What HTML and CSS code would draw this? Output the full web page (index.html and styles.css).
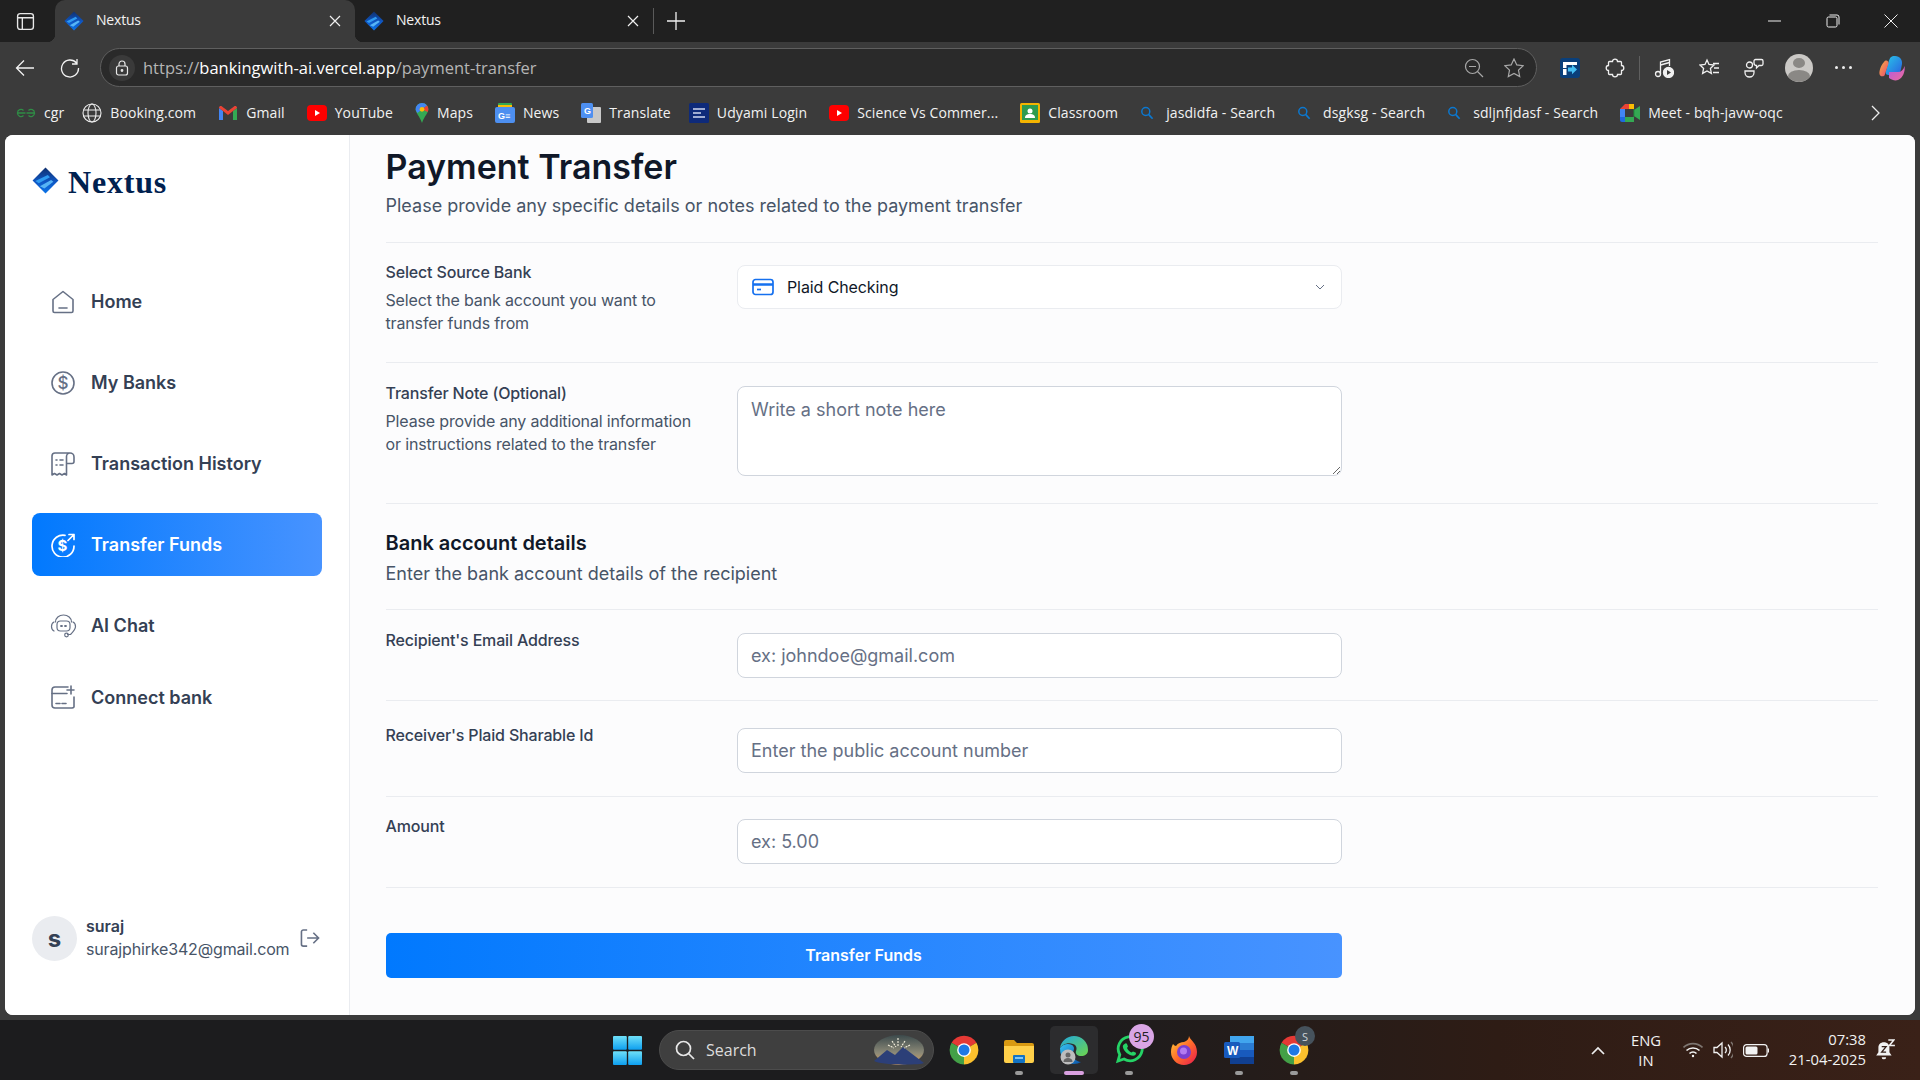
FILE: index.html
```html
<!DOCTYPE html>
<html lang="en">
<head>
<meta charset="utf-8">
<title>Nextus - Payment Transfer</title>
<link rel="stylesheet" href="styles.css">
</head>
<body>
<svg class="defs" width="0" height="0" aria-hidden="true">
  <defs>
    <linearGradient id="favg" x1="0" y1="0" x2="0" y2="1"><stop offset="0" stop-color="#10306e"/><stop offset=".55" stop-color="#0f57c4"/><stop offset="1" stop-color="#0a74e8"/></linearGradient>
    <symbol id="fav" viewBox="0 0 24 24">
      <path d="M12 .5 23.500 12 12 23.500 .5 12z" fill="url(#favg)"/>
      <path d="M3 12.500 14 7l2 2L6 14.500z" fill="#2f9bf0"/>
      <path d="M7 17l10-5.500 2 1.500-8 6z" fill="#57b4f5"/>
    </symbol>
    <symbol id="yt" viewBox="0 0 20 16"><rect width="20" height="16" rx="4" fill="#f00"/><path d="M8 5l5 3-5 3z" fill="#fff"/></symbol>
    <symbol id="mag" viewBox="0 0 14 14"><circle cx="5.8" cy="5.5" r="4" fill="none" stroke="#0b78d0" stroke-width="1.5"/><path d="M8.8 8.6 12.6 12.8" stroke="#0b78d0" stroke-width="1.7"/></symbol>
    <symbol id="chrome" viewBox="0 0 48 48">
      <path d="M24 24 4.100 12.500A23 23 0 0 1 43.900 12.500z" fill="#e53935"/>
      <path d="M24 24V47A23 23 0 0 1 4.100 12.500z" fill="#43a047"/>
      <path d="M24 24 43.900 12.500A23 23 0 0 1 24 47z" fill="#fbc02d"/>
      <circle cx="24" cy="24" r="11" fill="#fff"/><circle cx="24" cy="24" r="8.800" fill="#1e78e6"/>
    </symbol>
    <linearGradient id="copg1" x1="0" y1="0" x2="1" y2="1"><stop offset="0" stop-color="#28c6e8"/><stop offset="1" stop-color="#2a5fe0"/></linearGradient>
    <linearGradient id="copg2" x1="0" y1="0" x2="1" y2="1"><stop offset="0" stop-color="#f7b23b"/><stop offset="1" stop-color="#e9447a"/></linearGradient>
    <linearGradient id="copg3" x1="0" y1="0" x2="1" y2="1"><stop offset="0" stop-color="#b05be0"/><stop offset="1" stop-color="#f06a9c"/></linearGradient>
    <linearGradient id="edgeg" x1="0" y1="0" x2="1" y2="1"><stop offset="0" stop-color="#35c1f1"/><stop offset="1" stop-color="#0b53a8"/></linearGradient>
    <linearGradient id="edgeg2" x1="0" y1="0" x2="1" y2="1"><stop offset="0" stop-color="#1fa8e0"/><stop offset="1" stop-color="#6ed64b"/></linearGradient>
    <linearGradient id="ffg" x1="0" y1="0" x2="1" y2="1"><stop offset="0" stop-color="#ffd23a"/><stop offset=".5" stop-color="#ff6b2b"/><stop offset="1" stop-color="#e8184f"/></linearGradient>
    <linearGradient id="wing" x1="0" y1="0" x2="0" y2="1"><stop offset="0" stop-color="#6fe0f8"/><stop offset="1" stop-color="#0d9ff0"/></linearGradient>
    <linearGradient id="skyg" x1="0" y1="0" x2="0" y2="1"><stop offset="0" stop-color="#3c4a4c"/><stop offset=".6" stop-color="#8d8a78"/><stop offset="1" stop-color="#d9a25c"/></linearGradient>
  </defs>
</svg>

<div class="browser">
  <div class="tabstrip">
    <div class="tab-toggle">
      <svg class="ico-18" viewBox="0 0 18 18" fill="none" stroke="#e8e8e8" stroke-width="1.300"><rect x="1.500" y="1.500" width="15" height="15" rx="2.500"/><path d="M1.500 5.500h15M6 5.500v11"/></svg>
    </div>
    <div class="tab tab--active">
      <svg class="ico-20"><use href="#fav"/></svg>
      <span class="tab-title">Nextus</span>
      <svg class="tab-close" viewBox="0 0 12 12" fill="none" stroke="#f0f0f0" stroke-width="1.200"><path d="M1 1l10 10M11 1 1 11"/></svg>
    </div>
    <div class="tab">
      <svg class="ico-20"><use href="#fav"/></svg>
      <span class="tab-title">Nextus</span>
      <svg class="tab-close" viewBox="0 0 12 12" fill="none" stroke="#f0f0f0" stroke-width="1.200"><path d="M1 1l10 10M11 1 1 11"/></svg>
    </div>
    <div class="tab-sep"></div>
    <svg class="tab-plus" viewBox="0 0 18 18" fill="none" stroke="#f0f0f0" stroke-width="1.300"><path d="M9 0v18M0 9h18"/></svg>
    <div class="win-controls">
      <div class="win-btn"><svg class="ico-14" viewBox="0 0 14 14" fill="none" stroke="#eee" stroke-width="1"><path d="M0 7h13"/></svg></div>
      <div class="win-btn"><svg class="ico-14" viewBox="0 0 14 14" fill="none" stroke="#eee" stroke-width="1"><rect x="1" y="3" width="10" height="10" rx="1.500"/><path d="M3.500 1H11a2 2 0 0 1 2 2v7.500"/></svg></div>
      <div class="win-btn"><svg class="ico-14" viewBox="0 0 14 14" fill="none" stroke="#eee" stroke-width="1"><path d="M.5.5l13 13M13.500.5l-13 13"/></svg></div>
    </div>
  </div>

  <div class="toolbar">
    <div class="tb-slot"><svg class="ico-20" viewBox="0 0 20 20" fill="none" stroke="#f2f2f2" stroke-width="1.300"><path d="M19 10H1.500M9 2.500 1.500 10 9 17.500"/></svg></div>
    <div class="tb-slot"><svg class="ico-20" viewBox="0 0 20 20" fill="none" stroke="#f2f2f2" stroke-width="1.300"><path d="M16.500 5A8.500 8.500 0 1 0 18.500 10M17 1v5h-5"/></svg></div>
    <div class="addressbar">
      <div class="lock"><svg class="ico-16" viewBox="0 0 16 16" fill="none" stroke="#e8e8e8" stroke-width="1.200"><rect x="2.500" y="6" width="11" height="9" rx="2"/><path d="M5 6V4a3 3 0 0 1 6 0v2"/><circle cx="8" cy="10.500" r=".8" fill="#e8e8e8"/></svg></div>
      <div class="url"><span class="url-dim">https://</span><span class="url-host">bankingwith-ai.vercel.app</span><span class="url-dim">/payment-transfer</span></div>
      <div class="addr-icons">
        <div class="addr-slot"><svg class="ico-20" viewBox="0 0 20 20" fill="none" stroke="#a8a8a8" stroke-width="1.200"><circle cx="8.500" cy="8.500" r="7"/><path d="M13.500 13.500 19 19M5 8.500h7"/></svg></div>
        <div class="addr-slot"><svg class="ico-20" viewBox="0 0 20 20" fill="none" stroke="#a8a8a8" stroke-width="1.200"><path d="M10 1l2.800 5.900 6.400.8-4.700 4.400 1.200 6.400L10 15.400l-5.700 3.100 1.200-6.400L.8 7.700l6.400-.8z"/></svg></div>
      </div>
    </div>
    <div class="tb-icons">
      <div class="tb-slot"><svg class="ico-20" viewBox="0 0 20 20"><rect width="20" height="20" rx="3" fill="#0a3f7a"/><path d="M3 4h14v3H6.500v3H3zM3 11h3.500v6H3z" fill="#fff"/><path d="M8 9.500h4V6.800l5 4.700-5 4.700v-2.700H8z" fill="#45c0f5"/></svg></div>
      <div class="tb-slot"><svg class="ico-20" viewBox="0 0 20 20" fill="none" stroke="#f0f0f0" stroke-width="1.300"><path d="M7.500 3.500C7.500 2 8.700 1.200 10 1.200S12.500 2 12.500 3.500H15.500a1 1 0 0 1 1 1V7.500C18 7.500 18.800 8.700 18.800 10S18 12.500 16.500 12.500V15.500a1 1 0 0 1-1 1H12.500C12.500 18 11.300 18.800 10 18.800S7.500 18 7.500 16.500H4.500a1 1 0 0 1-1-1V12.500C2 12.500 1.200 11.300 1.200 10S2 7.500 3.500 7.500V4.500a1 1 0 0 1 1-1z"/></svg></div>
      <div class="tb-sep"></div>
      <div class="tb-slot"><svg class="ico-20" viewBox="0 0 20 20" fill="none" stroke="#f0f0f0" stroke-width="1.300"><circle cx="4" cy="16" r="2.500"/><path d="M6.500 16V4l9-2.500V8"/><path d="M6.500 7l9-2.500"/><circle cx="14.500" cy="14.500" r="5" fill="#f0f0f0"/><path d="M13 12v5l4-2.500z" fill="#3b3b3b" stroke="none"/></svg></div>
      <div class="tb-slot"><svg class="ico-20" viewBox="0 0 20 20" fill="none" stroke="#f0f0f0" stroke-width="1.300"><path d="M8 2l2 4.500 5 .6-3.600 3.300 1 5L8 13l-4.400 2.400 1-5L1 7.100l5-.6z"/><path d="M14 5.500h6M15 10h5M14 14.500h6"/></svg></div>
      <div class="tb-slot"><svg class="ico-20" viewBox="0 0 20 20" fill="none" stroke="#f0f0f0" stroke-width="1.300"><circle cx="5.500" cy="7" r="3"/><path d="M1 13h9v1.500A4.500 4.500 0 0 1 1 14.500z"/><path d="M10 3a1.500 1.500 0 0 1 1.500-1.500h6A1.500 1.500 0 0 1 19 3v3a1.500 1.500 0 0 1-1.500 1.500H15L12.500 10V7.500A2.500 2.500 0 0 1 10 5z"/></svg></div>
      <div class="tb-slot"><div class="profile"><div class="profile-head"></div><div class="profile-body"></div></div></div>
      <div class="tb-slot"><span class="dots"><i></i><i></i><i></i></span></div>
      <div class="tb-slot tb-slot--wide"><svg class="ico-28" viewBox="0 0 28 28"><path d="M17 2c-4 0-5 1.500-6.500 6L8 17c-1 3 .5 4 3 4h6c4 0 5-2 6-6l1-5c.5-4-2-8-7-8z" fill="url(#copg1)"/><path d="M6 8C3 11 1 17 1.500 20c.5 2.500 3 3 5 1.500l4-12C11 7 8 5 6 8z" fill="url(#copg2)"/><path d="M11 18h9c3 0 5.500-2 6.500-6 1 5-1.500 12-6.500 14-3 1-6 0-9-2z" fill="url(#copg3)"/></svg></div>
    </div>
  </div>

  <div class="bookmarks">
    <a class="bm bm--tight"><svg class="bm-ico bm-ico--wide" viewBox="0 0 20 10" fill="none" stroke="#2f8d46" stroke-width="1.300"><path d="M9.500 5H1.500a3.500 3.500 0 0 1 6-2.500M10.500 5h8a3.500 3.500 0 0 0-6-2.500M1.500 5a3.500 3.500 0 0 0 6 2.500M18.500 5a3.500 3.500 0 0 1-6 2.500"/></svg><span>cgr</span></a>
    <a class="bm"><svg class="bm-ico" viewBox="0 0 20 20" fill="none" stroke="#eee" stroke-width="1.100"><circle cx="10" cy="10" r="9"/><ellipse cx="10" cy="10" rx="4" ry="9"/><path d="M1.500 7h17M1.500 13h17"/></svg><span>Booking.com</span></a>
    <a class="bm"><svg class="bm-ico" viewBox="0 0 20 16"><path d="M1 15V3l4 3v9z" fill="#4285f4"/><path d="M19 15V3l-4 3v9z" fill="#34a853"/><path d="M1 3c0-2 2-2.500 3-1.500L10 6l6-4.500c1-1 3-.5 3 1.500l-4 3-5 4-5-4z" fill="#ea4335"/></svg><span>Gmail</span></a>
    <a class="bm"><svg class="bm-ico"><use href="#yt"/></svg><span>YouTube</span></a>
    <a class="bm"><svg class="bm-ico bm-ico--narrow" viewBox="0 0 14 22"><path d="M7 0a7 7 0 0 1 7 7c0 4-4 7-7 15C4 14 0 11 0 7a7 7 0 0 1 7-7z" fill="#34a853"/><path d="M7 0a7 7 0 0 1 5.500 2.700L2 11C1 9.500 0 8.500 0 7a7 7 0 0 1 7-7z" fill="#4285f4"/><path d="M12.500 2.700A7 7 0 0 1 14 7c0 1-.3 2-.8 3L7 7z" fill="#ea4335"/><circle cx="7" cy="7" r="2.600" fill="#fbbc04"/></svg><span>Maps</span></a>
    <a class="bm"><svg class="bm-ico" viewBox="0 0 20 20"><rect x="3" y="0" width="14" height="6" rx="1" fill="#34a853"/><rect x="0" y="4" width="20" height="16" rx="2" fill="#4d8ff0"/><rect x="3" y="2" width="14" height="2" fill="#fbbc04"/><text x="3" y="16" class="bm-news">G≡</text></svg><span>News</span></a>
    <a class="bm bm--tight"><svg class="bm-ico" viewBox="0 0 20 20"><rect x="6" y="4" width="14" height="16" rx="1" fill="#c8c8c8"/><rect width="12" height="15" rx="1.500" fill="#4d8ff0"/><text x="3" y="11" class="bm-news">G</text></svg><span>Translate</span></a>
    <a class="bm"><svg class="bm-ico" viewBox="0 0 20 20"><rect width="20" height="20" rx="1.500" fill="#0e2a7a"/><path d="M4 6h12M4 10h8M4 14h12" stroke="#cfd8f0" stroke-width="1.500"/></svg><span>Udyami Login</span></a>
    <a class="bm"><svg class="bm-ico"><use href="#yt"/></svg><span>Science Vs Commer...</span></a>
    <a class="bm"><svg class="bm-ico" viewBox="0 0 20 20"><rect width="20" height="20" rx="1.500" fill="#f4b400"/><rect x="2" y="2" width="16" height="15" fill="#2e9b4f"/><circle cx="10" cy="8" r="2.500" fill="#fff"/><path d="M5 15c0-3 2-4 5-4s5 1 5 4z" fill="#fff"/></svg><span>Classroom</span></a>
    <a class="bm"><svg class="bm-ico bm-ico--mag"><use href="#mag"/></svg><span>jasdidfa - Search</span></a>
    <a class="bm"><svg class="bm-ico bm-ico--mag"><use href="#mag"/></svg><span>dsgksg - Search</span></a>
    <a class="bm"><svg class="bm-ico bm-ico--mag"><use href="#mag"/></svg><span>sdljnfjdasf - Search</span></a>
    <a class="bm"><svg class="bm-ico" viewBox="0 0 20 18"><path d="M5 0h9v5H5v8H0V5z" fill="#ea4335"/><path d="M0 5h5v8H0z" fill="#4285f4"/><path d="M0 13h5v5H2a2 2 0 0 1-2-2z" fill="#1e6ae0"/><path d="M5 13h9v5H5z" fill="#34a853"/><path d="M9 0h5v5H9z" fill="#fbbc04"/><path d="M14 6l6-4v14l-6-4z" fill="#34a853"/><path d="M14 5v8" stroke="#1e8e3e" stroke-width="1"/></svg><span>Meet - bqh-javw-oqc</span></a>
    <svg class="bm-more" viewBox="0 0 10 16" fill="none" stroke="#eee" stroke-width="1.300"><path d="M1 1l7 7-7 7"/></svg>
  </div>
</div>

<div class="app">
  <aside class="sidebar">
    <div class="logo">
      <svg class="logo-ico"><use href="#fav"/></svg>
      <span class="logo-text">Nextus</span>
    </div>
    <nav class="nav">
      <a class="nav-item">
        <svg class="nav-ico" viewBox="0 0 24 24"><path d="M2 9.500 12 1.500l10 8V21a1.500 1.500 0 0 1-1.500 1.500h-17A1.500 1.500 0 0 1 2 21z"/><path d="M8 18h8"/></svg>
        <span>Home</span>
      </a>
      <a class="nav-item">
        <svg class="nav-ico" viewBox="0 0 24 24"><circle cx="12" cy="12" r="11"/><text x="12" y="18" class="nav-dollar">$</text></svg>
        <span>My Banks</span>
      </a>
      <a class="nav-item">
        <svg class="nav-ico" viewBox="0 0 24 24"><path d="M19 1H4a3 3 0 0 0-3 3v19l2.500-1.500L6 23l2.500-1.500L11 23l2.500-1.500 2 1.500V4.500A3.500 3.500 0 0 1 19 1a4 4 0 0 1 4 4v4.500a2 2 0 0 1-2 2h-5.500"/><path d="M5 8h1M9 8h3M5 13h1M9 13h3"/></svg>
        <span>Transaction History</span>
      </a>
      <a class="nav-item nav-item--active">
        <svg class="nav-ico" viewBox="0 0 24 24"><path d="M14 2.300A11 11 0 1 0 23 13"/><path d="M17 7.500 23 1.500M18 1.500h5V6.500"/><text x="11.500" y="18" class="nav-dollar">$</text></svg>
        <span>Transfer Funds</span>
      </a>
      <a class="nav-item">
        <svg class="nav-ico nav-ico--thin" viewBox="0 0 26 24"><path d="M5 8C5 4 8.500 1 13 1s8 3 8 7"/><rect x="6.500" y="7" width="13" height="10" rx="3.500"/><path d="M10.500 12h1M14.500 12h1" stroke-width="1.800"/><path d="M3.500 8C1.500 9 1 11 1 12.500S1.500 16 3.500 17M22.500 8c2 1 2.500 3 2.500 4.500 0 3-2 5-5 8h-3"/><circle cx="16" cy="21" r="1.800"/></svg>
        <span>AI Chat</span>
      </a>
      <a class="nav-item nav-item--short">
        <svg class="nav-ico" viewBox="0 0 24 24"><path d="M17 2H4a3 3 0 0 0-3 3v15a3 3 0 0 0 3 3h17a3 3 0 0 0 2-1V12"/><path d="M1 8.500h15M5 18.500h4M11 18.500h4M20 1v8M16 5h7"/></svg>
        <span>Connect bank</span>
      </a>
    </nav>
    <div class="user">
      <div class="avatar">s</div>
      <div class="user-info">
        <div class="user-name">suraj</div>
        <div class="user-email">surajphirke342@gmail.com</div>
      </div>
      <svg class="logout" viewBox="0 0 20 20" fill="none" stroke="#667085" stroke-width="1.700"><path d="M7 1H3a2 2 0 0 0-2 2v13a2 2 0 0 0 2 2h4"/><path d="M7 9.500h12M13.500 4l5.500 5.500-5.500 5.500"/></svg>
    </div>
  </aside>

  <main class="main">
    <header class="page-head">
      <h1 class="page-title">Payment Transfer</h1>
      <p class="page-sub">Please provide any specific details or notes related to the payment transfer</p>
    </header>
    <form class="form">
      <div class="row row--source">
        <div>
          <div class="label label--up">Select Source Bank</div>
          <p class="desc">Select the bank account you want to transfer funds from</p>
        </div>
        <div class="select">
          <svg class="select-ico" viewBox="0 0 22 18" fill="none" stroke="#1570ef" stroke-width="1.700"><rect x="1" y="1.500" width="20" height="15" rx="2.500"/><path d="M1 6.500h20" stroke-width="2.500"/><path d="M5 11.500h4"/></svg>
          <span class="select-text">Plaid Checking</span>
          <svg class="select-chev" viewBox="0 0 10 6" fill="none" stroke="#667085" stroke-width="1"><path d="M1 1l4 4 4-4"/></svg>
        </div>
      </div>
      <div class="row row--note">
        <div>
          <div class="label label--up">Transfer Note (Optional)</div>
          <p class="desc">Please provide any additional information or instructions related to the transfer</p>
        </div>
        <textarea class="field field--area" placeholder="Write a short note here"></textarea>
      </div>
      <div class="section-head">
        <h2 class="section-title">Bank account details</h2>
        <p class="page-sub">Enter the bank account details of the recipient</p>
      </div>
      <div class="row row--first">
        <div class="label">Recipient's Email Address</div>
        <input class="field" type="text" placeholder="ex: johndoe@gmail.com">
      </div>
      <div class="row row--tall">
        <div class="label">Receiver's Plaid Sharable Id</div>
        <input class="field" type="text" placeholder="Enter the public account number">
      </div>
      <div class="row row--last">
        <div class="label">Amount</div>
        <input class="field" type="text" placeholder="ex: 5.00">
      </div>
      <button class="submit" type="button">Transfer Funds</button>
    </form>
  </main>
</div>

<footer class="taskbar">
  <svg class="start" viewBox="0 0 30 30"><rect width="14.300" height="14.300" rx="1" fill="url(#wing)"/><rect x="15.700" width="14.300" height="14.300" rx="1" fill="url(#wing)"/><rect y="15.700" width="14.300" height="14.300" rx="1" fill="url(#wing)"/><rect x="15.700" y="15.700" width="14.300" height="14.300" rx="1" fill="url(#wing)"/></svg>
  <div class="search">
    <svg class="search-ico" viewBox="0 0 20 20" fill="none" stroke="#e8e8e8" stroke-width="1.700"><circle cx="8.500" cy="8.500" r="7"/><path d="M13.500 13.500 19 19"/></svg>
    <span class="search-text">Search</span>
    <svg class="search-art" viewBox="0 0 50 30"><ellipse cx="25" cy="15" rx="25" ry="15" fill="url(#skyg)"/><path d="M0 26 13 15l8 5 8-8 21 16c-3 2-40 3-50-2z" fill="#2c3f78"/><path d="M24 3v9M18 6l4 6M31 6l-4 6M14 10l6 3M36 10l-6 3" stroke="#f5f0dc" stroke-width="1.100" stroke-dasharray="2 1"/></svg>
  </div>
  <div class="apps">
    <div class="app-slot"><svg class="app-ico"><use href="#chrome"/></svg></div>
    <div class="app-slot"><svg class="app-ico" viewBox="0 0 30 30"><path d="M0 7a2 2 0 0 1 2-2h8l3 3h15a2 2 0 0 1 2 2v3H0z" fill="#d99a12"/><path d="M0 11h30v15a2 2 0 0 1-2 2H2a2 2 0 0 1-2-2z" fill="#ffd04a"/><rect x="9" y="20" width="12" height="8" rx="1" fill="#1273c4"/><rect x="11" y="22" width="8" height="2" fill="#7fc6f5"/></svg><i class="app-dot"></i></div>
    <div class="app-slot app-slot--active"><svg class="app-ico" viewBox="0 0 30 30"><path d="M15 1a14 14 0 0 1 14 14c0 4-3 6-7 6-3 0-6-2-5-5 1-2 1-6-3-7C8 7 3 10 1 13 2 6 8 1 15 1z" fill="url(#edgeg2)"/><path d="M1 13c3-4 8-5 12-3 3 2 2 5 1 7-2 4 2 9 8 10-6 4-21 3-21-14z" fill="url(#edgeg)"/><circle cx="9" cy="22" r="7.500" fill="#bdbdbd"/><circle cx="9" cy="20" r="2.500" fill="#666"/><path d="M4.500 27c0-3 2-4 4.500-4s4.500 1 4.500 4z" fill="#666"/></svg><i class="app-dot app-dot--active"></i></div>
    <div class="app-slot"><svg class="app-ico" viewBox="0 0 30 30" fill="none"><path d="M4 26l1.800-6.300A12 12 0 1 1 10 24z" stroke="#25d366" stroke-width="2.800"/><path d="M10.500 9c1-1 2-1 2.500 0l1 2.500-1 1.500c1 2 2.500 3.500 4.500 4.500l1.500-1 2.500 1c.8.500.6 1.700-.2 2.500-3 2.500-12-2.500-12.500-8.500 0-1 .8-2 1.700-2.500z" fill="#25d366"/></svg><span class="badge badge--pink">95</span><i class="app-dot"></i></div>
    <div class="app-slot"><svg class="app-ico" viewBox="0 0 30 30"><path d="M20 1c1 4 8 7 8 16a13 13 0 0 1-26 0c0-4 1-6 2-8 1 1 2 2 3 2 2-3 5-4 8-4 3-1 5-3 5-6z" fill="url(#ffg)"/><circle cx="15" cy="17" r="7" fill="#7a3fd0"/><circle cx="14.500" cy="16" r="3.500" fill="#b27bf0"/></svg></div>
    <div class="app-slot"><svg class="app-ico" viewBox="0 0 30 30"><rect x="6" y="1" width="24" height="28" rx="2" fill="#2b7cd3"/><rect x="6" y="1" width="24" height="7" fill="#41a5ee"/><rect x="6" y="15" width="24" height="7" fill="#185abd"/><rect x="6" y="22" width="24" height="7" fill="#103f91"/><rect y="7" width="16" height="16" rx="1.500" fill="#185abd"/><text x="3" y="19.500" class="word-w">W</text></svg><i class="app-dot"></i></div>
    <div class="app-slot"><svg class="app-ico"><use href="#chrome"/></svg><span class="badge badge--grey">S</span><i class="app-dot"></i></div>
  </div>
  <div class="tray">
    <svg class="tray-chev" viewBox="0 0 14 9" fill="none" stroke="#eee" stroke-width="1.700"><path d="M1 8l6-6 6 6"/></svg>
    <div class="tray-lang"><div>ENG</div><div>IN</div></div>
    <svg class="tray-wifi" viewBox="0 0 20 16" fill="none" stroke="#f2f2f2" stroke-width="1.600"><path d="M.5 5.500a13.500 13.500 0 0 1 19 0" stroke="#7d7570"/><path d="M3.500 8.500a9.500 9.500 0 0 1 13 0M6.500 11.500a5 5 0 0 1 7 0"/><circle cx="10" cy="14" r="1.200" fill="#f2f2f2" stroke="none"/></svg>
    <svg class="tray-vol" viewBox="0 0 20 18" fill="none" stroke="#f2f2f2" stroke-width="1.300"><path d="M1 6.500h3L9 2v14l-5-4.500H1z"/><path d="M12 6a4 4 0 0 1 0 6"/><path d="M15 3.500a8 8 0 0 1 0 11" /><path d="M18 1a12 12 0 0 1 0 16" stroke="#7d7570"/></svg>
    <svg class="tray-bat" viewBox="0 0 26 13" fill="none" stroke="#f2f2f2" stroke-width="1.200"><rect x=".6" y=".6" width="23.500" height="11.800" rx="3"/><path d="M25.400 4.500v4"/><rect x="2.500" y="2.500" width="12" height="8" rx="1.500" fill="#f2f2f2" stroke="none"/></svg>
    <div class="tray-clock"><div>07:38</div><div>21-04-2025</div></div>
    <svg class="tray-bell" viewBox="0 0 18 20"><path d="M8 3c-3 0-5 2-5 5v4l-2 3h14l-2-3V8c0-3-2-5-5-5z" fill="#f2f2f2"/><path d="M6 16.500a2 2 0 0 0 4 0z" fill="#f2f2f2"/><path d="M6 7h4l-4 5h4" stroke="#33201a" stroke-width="1.200" fill="none"/><path d="M12 1h5l-4 5h5" stroke="#f2f2f2" stroke-width="1.400" fill="none"/></svg>
  </div>
</footer>
</body>
</html>
```

FILE: styles.css
```css
* { box-sizing: border-box; }
html, body { margin: 0; padding: 0; }
body {
  width: 1920px;
  height: 1080px;
  overflow: hidden;
  display: flex;
  flex-direction: column;
  background: #3b3b3b;
  font-family: Inter, "Liberation Sans", sans-serif;
}
.defs { position: absolute; }
svg { display: block; flex: none; }
p, h1, h2 { margin: 0; }
.ico-14 { width: 14px; height: 14px; }
.ico-16 { width: 16px; height: 16px; }
.ico-18 { width: 19px; height: 19px; }
.ico-20 { width: 20px; height: 20px; }
.ico-28 { width: 28px; height: 28px; }

/* browser chrome */
.browser { flex: none; font-family: "Open Sans", "Noto Sans", sans-serif; color: #f2f2f2; }
.tabstrip { height: 42px; display: flex; align-items: center; background: #202020; }
.tab-toggle { width: 55px; display: flex; justify-content: center; padding-right: 5px; }
.tab {
  position: relative;
  width: 298px;
  height: 42px;
  display: flex;
  align-items: center;
  padding: 0 14px 0 9px;
  gap: 12px;
  font-size: 14px;
}
.tab--active { width: 300px; background: #3b3b3b; border-radius: 10px 10px 0 0; }
.tab--active::before,
.tab--active::after {
  content: "";
  position: absolute;
  bottom: 0;
  width: 8px;
  height: 8px;
}
.tab--active::before { left: -8px; background: radial-gradient(circle at 0 0, transparent 8px, #3b3b3b 8.500px); }
.tab--active::after { right: -8px; background: radial-gradient(circle at 100% 0, transparent 8px, #3b3b3b 8.500px); }
.tab-title { flex: 1; letter-spacing: -.2px; margin-top: -3px; }
.tab-close { width: 12px; height: 12px; }
.tab-sep { width: 1px; height: 26px; background: #5a5a5a; }
.tab-plus { width: 18px; height: 18px; margin-left: 13px; }
.win-controls { margin-left: auto; display: flex; }
.win-btn { width: 58px; display: flex; justify-content: center; }

.toolbar { height: 48px; display: flex; align-items: center; padding: 3px 0 0 2px; background: #3b3b3b; }
.tb-slot { width: 45px; height: 40px; display: flex; align-items: center; justify-content: center; flex: none; }
.tb-slot--wide { width: 52px; }
.addressbar {
  width: 1437px;
  height: 39px;
  margin-left: 8px;
  display: flex;
  align-items: center;
  padding: 0 2px 0 8px;
  background: #2a2a2a;
  border: 1px solid #5f5f5f;
  border-radius: 20px;
}
.lock { width: 26px; height: 26px; border-radius: 50%; background: #3a3a3a; display: flex; align-items: center; justify-content: center; }
.url { margin-left: 8px; font-size: 16.500px; white-space: nowrap; }
.url-dim { color: #b5b5b5; }
.url-host { color: #fff; }
.addr-icons { margin-left: auto; display: flex; }
.addr-slot { width: 40px; display: flex; justify-content: center; }
.tb-icons { display: flex; align-items: center; margin-left: 10px; }
.tb-sep { width: 1px; height: 24px; background: #5f5f5f; margin: 0 1px 0 2px; }
.profile { width: 28px; height: 28px; border-radius: 50%; background: #cbc9c6; overflow: hidden; display: flex; flex-direction: column; align-items: center; }
.profile-head { width: 12px; height: 12px; border-radius: 50%; background: #8a8885; margin-top: 4px; }
.profile-body { width: 22px; height: 14px; border-radius: 50%; background: #8a8885; margin-top: 2px; }
.dots { display: flex; gap: 4px; }
.dots i { width: 3px; height: 3px; border-radius: 50%; background: #eee; }

.bookmarks { height: 45px; display: flex; align-items: center; padding-left: 16px; background: #3b3b3b; font-size: 14px; letter-spacing: .1px; }
.bm { display: flex; align-items: center; gap: 8px; margin-right: 22px; white-space: nowrap; color: #f2f2f2; }
.bm--tight { margin-right: 18px; }
.bm-ico { width: 20px; height: 20px; }
.bm-ico--narrow { width: 14px; }
.bm-ico--mag { width: 14px; height: 14px; margin-right: 4px; }
.bm-news { font: 700 9px "Liberation Sans", sans-serif; fill: #fff; }
.bm-more { width: 10px; height: 16px; margin-left: auto; margin-right: 39px; }

/* app */
.app {
  width: 1910px;
  height: 880px;
  margin-left: 5px;
  display: flex;
  flex: none;
  background: #fff;
  border-radius: 8px;
  overflow: hidden;
}
.sidebar {
  width: 345px;
  flex: none;
  display: flex;
  flex-direction: column;
  padding: 0 27px;
  background: #fff;
  border-right: 1px solid #eaecf0;
}
.logo { height: 48px; margin-top: 23px; display: flex; align-items: center; gap: 9px; }
.logo-ico { width: 27px; height: 27px; margin-top: -3px; }
.logo-text { font: 700 32px "Liberation Serif", serif; letter-spacing: .8px; color: #00214f; }
.nav { margin-top: 64px; display: flex; flex-direction: column; gap: 18px; }
.nav-item {
  height: 63px;
  display: flex;
  align-items: center;
  gap: 16px;
  padding-left: 19px;
  border-radius: 8px;
  font-size: 18px;
  font-weight: 600;
  color: #344054;
}
.nav-item--short { height: 44px; }
.nav-item--active { color: #fff; background: linear-gradient(90deg, #0179fe, #4893ff); }
.nav-ico { width: 24px; height: 24px; fill: none; stroke: #667085; stroke-width: 1.600; stroke-linecap: round; stroke-linejoin: round; }
.nav-ico--thin { width: 27px; margin: 0 -1.500px; stroke-width: 1.200; }
.nav-dollar { font: 500 17px Inter, sans-serif; fill: #667085; stroke: none; text-anchor: middle; }
.nav-item--active .nav-ico { stroke: #fff; stroke-width: 1.700; }
.nav-item--active .nav-dollar { fill: #fff; font-weight: 700; font-size: 15px; }

.user { margin-top: auto; margin-bottom: 54px; display: flex; align-items: center; gap: 9px; }
.avatar {
  width: 45px;
  height: 45px;
  flex: none;
  display: flex;
  align-items: center;
  justify-content: center;
  border-radius: 50%;
  background: #eaecf0;
  color: #344054;
  font-size: 24px;
  font-weight: 700;
}
.user-info { line-height: 23px; }
.user-name { font-size: 16px; font-weight: 600; color: #344054; }
.user-email { font-size: 16px; letter-spacing: -.16px; color: #475467; white-space: nowrap; }
.logout { width: 20px; height: 19px; margin-left: 2px; }

.main { flex: 1; padding: 10px 37px 0 35.500px; background: #fcfcfd; min-width: 0; }
.page-head { padding-bottom: 22px; border-bottom: 1px solid #eaecf0; }
.page-title { font-size: 34px; line-height: 44px; font-weight: 600; color: #101828; }
.page-sub { margin-top: 3px; font-size: 18px; line-height: 28px; color: #475467; }
.row {
  display: grid;
  grid-template-columns: 351.500px 605px;
  border-bottom: 1px solid #eaecf0;
  padding: 18px 0 27px;
}
.row--note { padding: 19px 0 27px; }
.row--first { padding: 18px 0 22px; }
.row--tall { padding: 22px 0 23px; }
.row--last { padding: 17px 0 23px; }
.label { font-size: 16px; letter-spacing: -.16px; line-height: 24px; font-weight: 500; color: #344054; }
.label--up { margin: -1px 0 5px; }
.desc { margin-top: 4px; max-width: 320px; font-size: 16px; letter-spacing: -.15px; line-height: 23px; color: #475467; }
.select {
  height: 44px;
  margin-top: 4px;
  display: flex;
  align-items: center;
  padding: 0 14px;
  background: #fff;
  border: 1px solid #eaecf0;
  border-radius: 8px;
}
.select-ico { width: 22px; height: 18px; }
.select-text { margin-left: 13px; font-size: 16px; letter-spacing: -.1px; color: #101828; }
.select-chev { width: 10px; height: 6px; margin-left: auto; margin-right: 2px; }
.field {
  display: block;
  width: 605px;
  height: 45px;
  margin-top: 5px;
  padding: 0 13px;
  background: #fff;
  border: 1px solid #d0d5dd;
  border-radius: 8px;
  font: 18px Inter, sans-serif;
  color: #101828;
  outline: none;
}
.field::placeholder { color: #667085; opacity: 1; }
.field--area { height: 90px; margin-top: 4px; padding: 9px 13px; line-height: 28px; resize: vertical; }
.section-head { padding: 25px 0 21px; border-bottom: 1px solid #eaecf0; }
.section-title { font-size: 20px; line-height: 28px; font-weight: 600; color: #101828; }
.section-head .page-sub { margin-top: 3px; }
.submit {
  display: block;
  width: 956px;
  height: 45px;
  margin-top: 45px;
  padding: 0 0 2px;
  border: 0;
  border-radius: 5px;
  background: linear-gradient(90deg, #0179fe, #4893ff);
  color: #fff;
  font: 600 16px Inter, sans-serif;
}

/* taskbar */
.taskbar {
  height: 60px;
  margin-top: 5px;
  flex: none;
  display: flex;
  align-items: center;
  padding-left: 613px;
  background: linear-gradient(90deg, #1c1c1e 0%, #1c1c1e 55%, #2e1c15 78%, #3a2118 100%);
  font-family: "Open Sans", "Noto Sans", sans-serif;
  color: #f2f2f2;
}
.start { width: 29px; height: 29px; }
.search {
  width: 275px;
  height: 40px;
  margin-left: 17px;
  display: flex;
  align-items: center;
  padding: 0 9px 0 15px;
  background: #3f3f3f;
  border: 1px solid #4c4c4c;
  border-radius: 20px;
  font-size: 16px;
}
.search-ico { width: 20px; height: 20px; }
.search-text { margin-left: 11px; color: #dcdcdc; }
.search-art { width: 50px; height: 30px; margin-left: auto; }
.apps { margin-left: 2px; display: flex; }
.app-slot { position: relative; width: 55px; height: 48px; display: flex; align-items: center; justify-content: center; }
.app-slot--active { background: #2c2c2e; border-radius: 5px; width: 48px; margin: 0 3.500px; }
.app-ico { width: 30px; height: 30px; }
.app-dot { position: absolute; left: 50%; bottom: -1px; width: 8px; height: 4px; margin-left: -4px; border-radius: 2px; background: #9a9a9a; }
.app-dot--active { width: 20px; margin-left: -10px; background: #d9a0e0; }
.badge { position: absolute; display: flex; align-items: center; justify-content: center; border-radius: 50%; font-size: 14px; }
.badge--pink { top: -2px; right: 2px; width: 25px; height: 25px; background: #d9a5e5; color: #222; }
.badge--grey { top: 0; right: 6px; width: 20px; height: 20px; background: #46525c; color: #cfd4d8; font-size: 11px; }
.word-w { font: 700 12px "Liberation Sans", sans-serif; fill: #fff; }
.tray { margin-left: auto; display: flex; align-items: center; font-size: 14.800px; }
.tray-chev { width: 14px; height: 9px; margin-right: 21px; }
.tray-lang { width: 40px; text-align: center; line-height: 20px; margin-right: 17px; }
.tray-wifi { width: 20px; height: 16px; margin-right: 10px; }
.tray-vol { width: 20px; height: 18px; margin-right: 10px; }
.tray-bat { width: 26px; height: 13px; }
.tray-clock { width: 87px; margin-top: -2px; margin-left: 10px; text-align: right; line-height: 20px; }
.tray-bell { width: 20px; height: 22px; margin-left: 9px; margin-right: 25px; }
```
